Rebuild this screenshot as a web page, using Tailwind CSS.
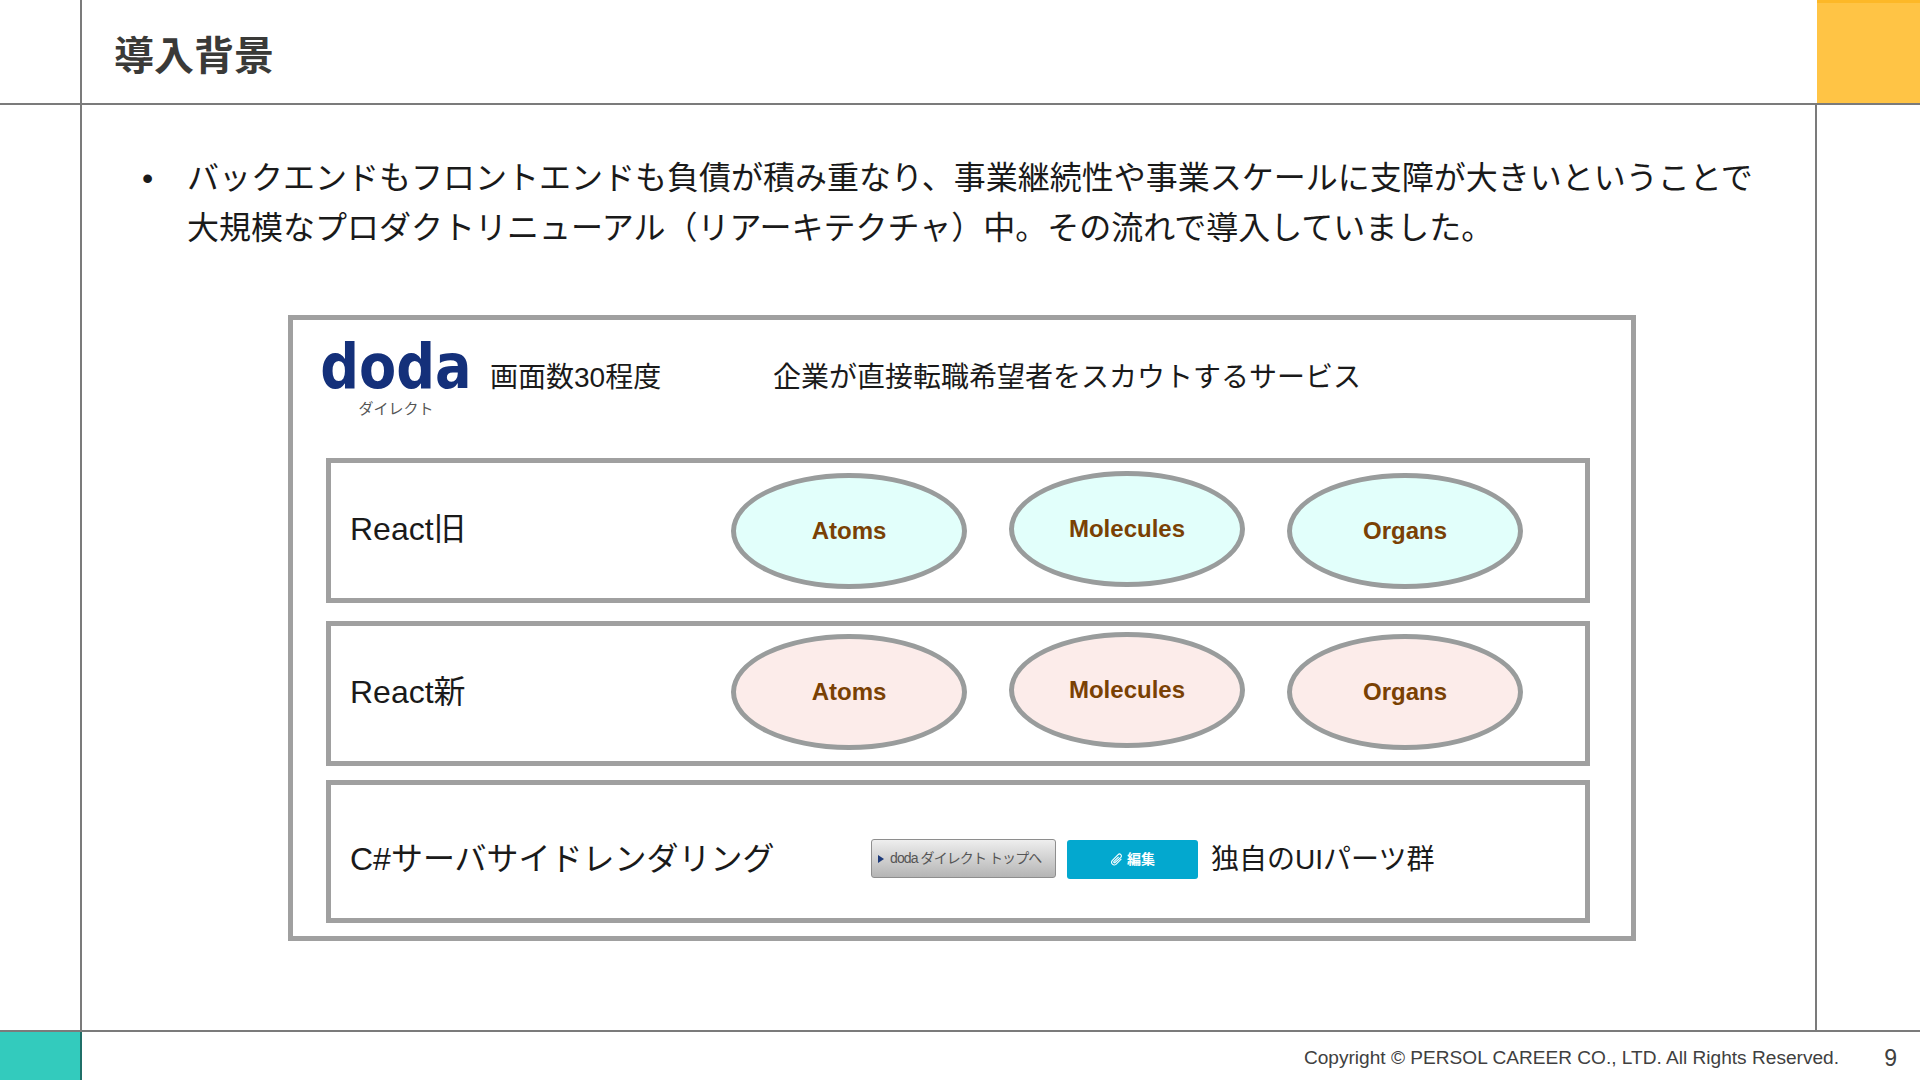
<!DOCTYPE html>
<html lang="ja">
  <head>
    <meta charset="UTF-8" />
    <title>導入背景</title>
    <script src="https://cdn.jsdelivr.net/npm/@tailwindcss/browser@4"></script>
  </head>
  <body class="bg-white overflow-hidden font-['Liberation_Sans','Noto_Sans_CJK_JP',sans-serif] text-[#1a1a1a]">
    <div class="w-[1920px] h-[1080px] flex flex-col">
      <!-- ヘッダー -->
      <header class="h-[105px] flex border-b-2 border-[#7b7b7b]">
        <div class="w-[82px] border-r-2 border-[#7b7b7b]"></div>
        <h1 class="w-[1735px] pl-[32px] pt-[31px] text-[40px] leading-[50px] font-bold text-[#3a3a38]">導入背景</h1>
        <div class="flex-1 bg-[#ffc445] border-t-[3px] border-[#fdb827]"></div>
      </header>

      <!-- 本文 -->
      <main class="h-[925px] flex">
        <div class="w-[82px] border-r-2 border-[#7b7b7b]"></div>
        <div class="w-[1735px] border-r-2 border-[#7b7b7b]">
          <div class="flex pt-[48px] text-[32px] leading-[50px]">
            <span class="w-[105px] pl-[60px]">•</span>
            <p class="w-[1600px]">
              バックエンドもフロントエンドも負債が積み重なり、事業継続性や事業スケールに支障が大きいということで<br />
              大規模なプロダクトリニューアル（リアーキテクチャ）中。その流れで導入していました。
            </p>
          </div>

          <div class="ml-[206px] mt-[62px] w-[1348px] h-[626px] border-[5px] border-[#a0a0a0] pl-[33px]">
            <!-- サービス概要 -->
            <div class="h-[138px] flex items-start">
              <div class="w-[146px] ml-[-3px] mt-[17px] flex flex-col items-center">
                <span class="inline-block scale-x-[0.86] text-[63px] leading-[60px] font-bold font-['DejaVu_Sans'] text-[#14307a]">doda</span>
                <span class="mt-[3px] text-[15px] leading-[18px] text-[#555555]">ダイレクト</span>
              </div>
              <span class="ml-[21px] mt-[39px] w-[283px] text-[28px] leading-[38px]">画面数30程度</span>
              <span class="mt-[39px] text-[28px] leading-[38px]">企業が直接転職希望者をスカウトするサービス</span>
            </div>

            <!-- React旧 -->
            <div class="w-[1264px] h-[145px] flex items-center border-[5px] border-[#a0a0a0] pl-[19px]">
              <span class="w-[381px] mb-[3px] text-[32px] leading-[40px]">React旧</span>
              <div class="w-[236px] h-[116px] flex items-center justify-center rounded-[50%] border-[5px] border-[#999c9c] bg-[#e2fffb] text-[24px] font-bold text-[#7a4104]">Atoms</div>
              <div class="w-[236px] h-[116px] mb-[4px] ml-[42px] flex items-center justify-center rounded-[50%] border-[5px] border-[#999c9c] bg-[#e2fffb] text-[24px] font-bold text-[#7a4104]">Molecules</div>
              <div class="w-[236px] h-[116px] ml-[42px] flex items-center justify-center rounded-[50%] border-[5px] border-[#999c9c] bg-[#e2fffb] text-[24px] font-bold text-[#7a4104]">Organs</div>
            </div>

            <!-- React新 -->
            <div class="w-[1264px] h-[145px] mt-[18px] flex items-center border-[5px] border-[#a0a0a0] pl-[19px]">
              <span class="w-[381px] mb-[3px] text-[32px] leading-[40px]">React新</span>
              <div class="w-[236px] h-[116px] mb-[3px] flex items-center justify-center rounded-[50%] border-[5px] border-[#999c9c] bg-[#fcecea] text-[24px] font-bold text-[#7a4104]">Atoms</div>
              <div class="w-[236px] h-[116px] mb-[7px] ml-[42px] flex items-center justify-center rounded-[50%] border-[5px] border-[#999c9c] bg-[#fcecea] text-[24px] font-bold text-[#7a4104]">Molecules</div>
              <div class="w-[236px] h-[116px] mb-[3px] ml-[42px] flex items-center justify-center rounded-[50%] border-[5px] border-[#999c9c] bg-[#fcecea] text-[24px] font-bold text-[#7a4104]">Organs</div>
            </div>

            <!-- C# -->
            <div class="w-[1264px] h-[143px] mt-[14px] flex items-center border-[5px] border-[#a0a0a0] pl-[19px] pt-[14px]">
              <span class="w-[521px] text-[32px] leading-[40px]">C#サーバサイドレンダリング</span>
              <div class="w-[185px] h-[39px] flex items-center gap-[6px] pl-[6px] rounded-[3px] border border-[#8e8e8e] bg-gradient-to-b from-[#eeeeee] to-[#b5b5b5] text-[14px] text-[#555555]">
                <svg width="6" height="8" viewBox="0 0 6 8"><path d="M0 0 L6 4 L0 8 Z" fill="#1d3a7a" /></svg>
                <span class="whitespace-nowrap tracking-[-0.9px]">doda ダイレクト トップへ</span>
              </div>
              <div class="w-[131px] h-[39px] ml-[11px] mt-[2px] flex items-center justify-center gap-[4px] rounded-[3px] bg-[#03a8cf] text-[14px] font-bold text-white">
                <svg width="13" height="13" viewBox="0 0 24 24" fill="none" stroke="white" stroke-width="2"><path d="M21 11 L11 21 a5 5 0 0 1 -7 -7 L15 3 a3.5 3.5 0 0 1 5 5 L9 18 a1.5 1.5 0 0 1 -2 -2 L16 7" /></svg>
                <span>編集</span>
              </div>
              <span class="ml-[13px] mt-[3px] text-[28px] leading-[38px]">独自のUIパーツ群</span>
            </div>
          </div>
        </div>
      </main>

      <!-- フッター -->
      <footer class="h-[50px] flex border-t-2 border-[#7b7b7b] text-[#404040]">
        <div class="w-[82px] bg-[#33cbbd] border-r-2 border-[#1f6f68]"></div>
        <div class="flex-1 flex items-center justify-end pt-[3px]">
          <span class="text-[19.1px] leading-[28px]">Copyright © PERSOL CAREER CO., LTD. All Rights Reserved.</span>
          <span class="w-[81px] pr-[23px] text-right text-[23px] leading-[28px]">9</span>
        </div>
      </footer>
    </div>
  </body>
</html>
